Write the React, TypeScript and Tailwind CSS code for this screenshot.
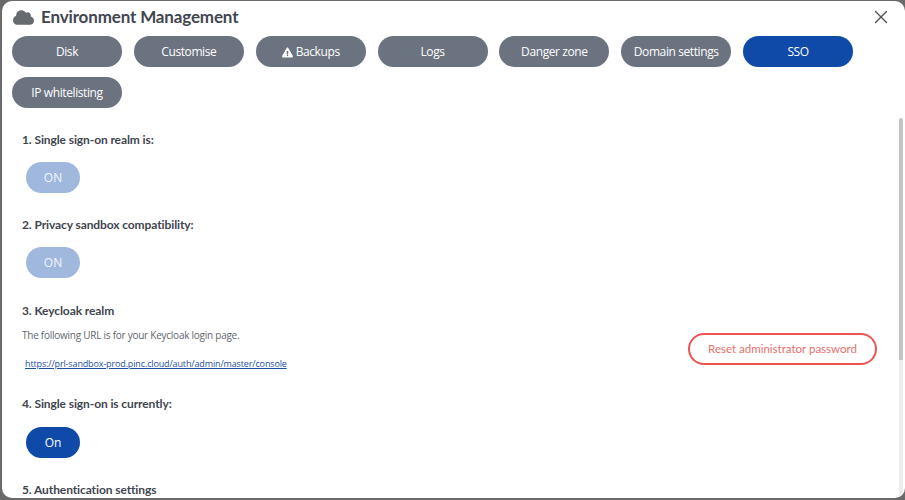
import { X } from 'lucide-react';
import { FaCloud, FaExclamationTriangle } from 'react-icons/fa';

const tabs = ['Disk', 'Customise', 'Backups', 'Logs', 'Danger zone', 'Domain settings', 'SSO', 'IP whitelisting'];

function SectionLabel({ children }: { children: string }) {
  return <p className="font-['Lato',sans-serif] text-[12px] leading-[18px] font-bold tracking-[-0.1px] text-[#3f4650]">{children}</p>;
}

function Toggle({ label, active }: { label: string; active?: boolean }) {
  return (
    <div className={`ml-1 flex h-[31px] w-[54px] items-center justify-center rounded-full text-[12px] ${active ? 'bg-[#0f4aa8] text-white' : 'bg-[#a0b8de] text-[#f3f6fb]'}`}>
      {label}
    </div>
  );
}

export default function App() {
  return (
    <div className="h-[500px] w-[905px] overflow-hidden bg-[#6a6a6a] pt-px pb-[2px] pl-[2px] font-['Open_Sans',sans-serif]">
      <div className="flex h-full flex-col overflow-hidden rounded-[10px] bg-white">
        {/* Header */}
        <div className="flex h-[35px] shrink-0 items-center justify-between pb-[3px] pl-[11px] pr-[13px]">
          <div className="flex items-center gap-[7px]">
            <FaCloud className="h-[21px] w-[21px] text-[#666b70]" />
            <h1 className="font-['Lato',sans-serif] text-[17px] font-bold tracking-[-0.15px] text-[#3f4650]">Environment Management</h1>
          </div>
          <X className="h-[22px] w-[22px] text-[#4b5056]" strokeWidth={1.5} />
        </div>

        {/* Tabs */}
        <div className="flex shrink-0 flex-wrap gap-x-[11.85px] gap-y-[10px] pl-[10px]">
          {tabs.map((tab) => (
            <div
              key={tab}
              className={`flex h-[31px] w-[110px] items-center justify-center gap-[3px] rounded-full pt-px text-[12px] tracking-[-0.4px] text-white ${tab === 'SSO' ? 'bg-[#0f4aa8]' : 'bg-[#6b7280]'}`}
            >
              {tab === 'Backups' && <FaExclamationTriangle className="h-[11px] w-[11px]" />}
              {tab}
            </div>
          ))}
        </div>

        <div className="flex min-h-0 flex-1 pt-[10px]">
          {/* Body */}
          <div className="flex-1 overflow-hidden pl-[20px] pr-[22px] pt-[13px]">
            <SectionLabel>1. Single sign-on realm is:</SectionLabel>
            <div className="mt-[13px]">
              <Toggle label="ON" />
            </div>

            <div className="mt-[23px]">
              <SectionLabel>2. Privacy sandbox compatibility:</SectionLabel>
            </div>
            <div className="mt-[13px]">
              <Toggle label="ON" />
            </div>

            <div className="mt-[24px]">
              <SectionLabel>3. Keycloak realm</SectionLabel>
            </div>
            <div className="flex items-center justify-between">
              <div>
                <p className="mt-[7px] text-[10px] leading-[16px] tracking-[-0.25px] text-[#62676e]">The following URL is for your Keycloak login page.</p>
                <a className="mt-[13px] ml-[3px] block text-[9px] leading-[16px] tracking-[-0.14px] text-[#1d4fa3] underline">
                  https://prl-sandbox-prod.pinc.cloud/auth/admin/master/console
                </a>
              </div>
              <div className="mt-[5px] flex h-[32px] w-[189px] items-center justify-center rounded-full border-2 border-[#ef5350] bg-white font-['Lato',sans-serif] text-[11.5px] text-[#e5706c]">
                Reset administrator password
              </div>
            </div>

            <div className="mt-[23px]">
              <SectionLabel>4. Single sign-on is currently:</SectionLabel>
            </div>
            <div className="mt-[14px]">
              <Toggle label="On" active />
            </div>

            <div className="mt-[23px]">
              <SectionLabel>5. Authentication settings</SectionLabel>
            </div>
          </div>

          {/* Scrollbar */}
          <div className="mr-[2px] w-[4px] shrink-0">
            <div className="h-[242px] rounded-t-sm bg-[#c4c4c4]" />
            <div className="h-full bg-[#ececec]" />
          </div>
        </div>
      </div>
    </div>
  );
}
